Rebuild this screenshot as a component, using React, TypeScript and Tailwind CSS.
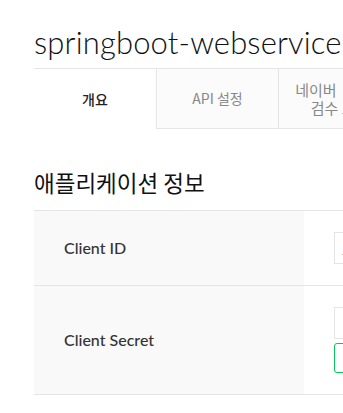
export default function App() {
  return (
    <div className="h-[413px] w-[343px] overflow-hidden bg-white">
      <div className="w-[620px] pl-[34px] font-['Noto_Sans_CJK_KR','Noto_Sans',sans-serif]">
        <h1 className="pt-[22px] pb-[6px] font-['Lato','Noto_Sans_CJK_KR',sans-serif] text-[31px] font-light leading-[40px] tracking-[0.15px] text-[#111]">
          springboot-webservice
        </h1>
        <nav className="flex h-[61px] border-t border-[#e5e5e5]">
          <div className="flex w-[122px] items-center justify-center text-[14px] font-medium text-[#222]">개요</div>
          <div className="flex w-[123px] items-center justify-center border-x border-b border-[#e5e5e5] bg-[#fbfbfb] text-[14px] text-[#888]">
            API 설정
          </div>
          <div className="flex w-[123px] flex-col items-center justify-center border-r border-b border-[#e5e5e5] bg-[#fbfbfb] text-[15px] leading-[18px] text-[#888]">
            <span className="whitespace-pre">{"네이버  로그인"}</span>
            <span>검수 요청</span>
          </div>
        </nav>
        <h2 className="pt-[38px] pb-[13px] text-[22.5px] font-normal leading-[30px] text-[#111]">애플리케이션 정보</h2>
        <div className="border-t border-[#e5e5e5]">
          <div className="flex h-[75px] border-b border-[#e5e5e5]">
            <div className="flex w-[270px] items-center bg-[#f9f9f9] pl-[30px] font-['Lato',sans-serif] text-[16px] font-medium text-[#333]">
              Client ID
            </div>
            <div className="flex items-center pl-[30px]">
              <div className="flex h-[32px] w-[260px] items-center border border-[#e5e5e5] px-[7px] text-[13px] text-[#999]">
                _
              </div>
            </div>
          </div>
          <div className="flex h-[109px] border-b border-[#e5e5e5]">
            <div className="flex w-[270px] items-center bg-[#f9f9f9] pl-[30px] font-['Lato',sans-serif] text-[16px] font-medium text-[#333]">
              Client Secret
            </div>
            <div className="flex flex-col justify-center gap-[4px] pl-[30px]">
              <div className="h-[32px] w-[260px] border border-[#e5e5e5]" />
              <div className="h-[30px] w-[80px] rounded-[3px] border border-[#03c75a]" />
            </div>
          </div>
        </div>
      </div>
    </div>
  );
}
